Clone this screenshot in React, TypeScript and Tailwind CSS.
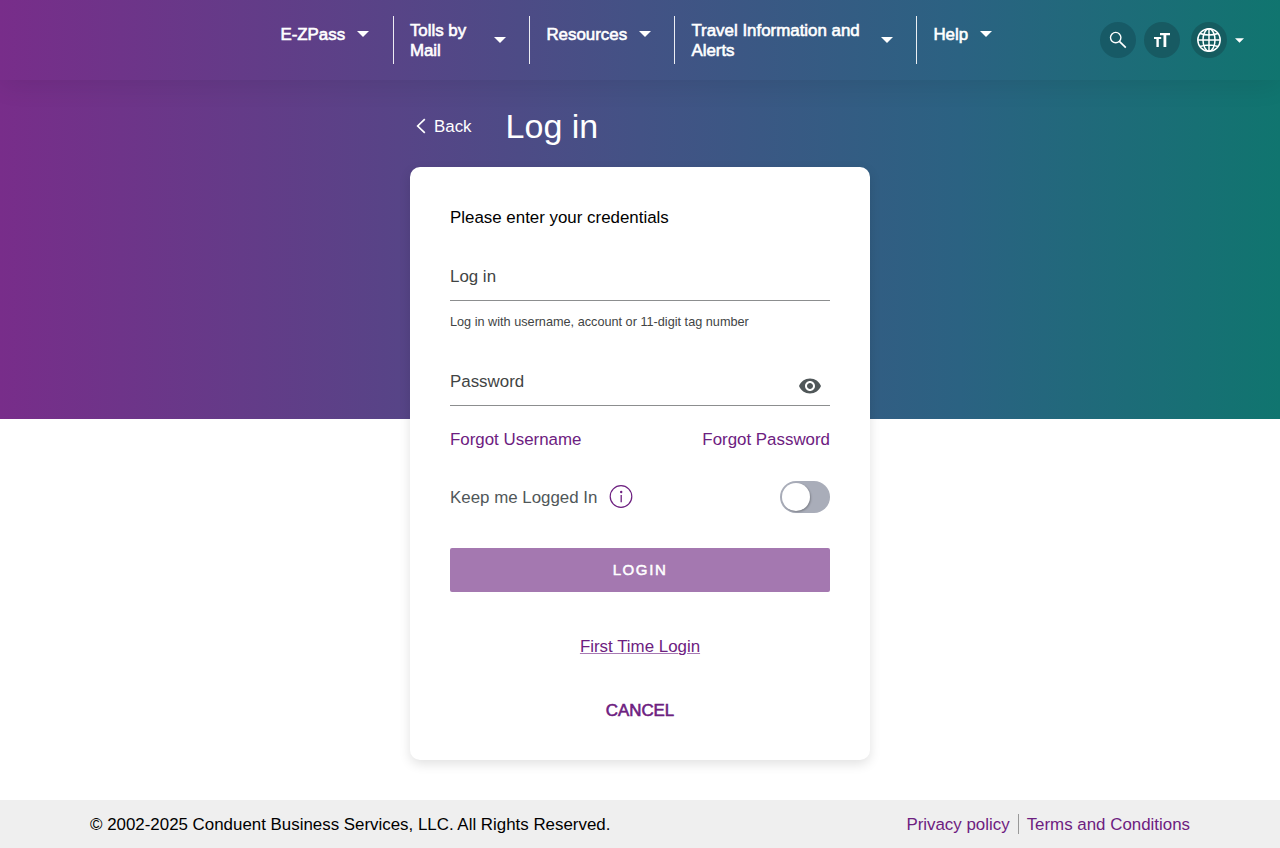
import React, { useState } from "react";

type NavEntry = { label: string; box: string; text: string; double?: boolean };

const NAV: NavEntry[] = [
  { label: "E-ZPass", box: "w-[113px]", text: "w-[76.5px]" },
  { label: "Tolls by Mail", box: "w-[136px] border-l border-white/90 pl-[15.5px]", text: "w-[84px]", double: true },
  { label: "Resources", box: "w-[145px] border-l border-white/90 pl-4", text: "w-[92.5px]" },
  { label: "Travel Information and Alerts", box: "w-[242px] border-l border-white/90 pl-4", text: "w-[189.5px]", double: true },
  { label: "Help", box: "w-[90px] border-l border-white/90 pl-4", text: "w-[46.5px]" },
];

function Caret({ className }: { className: string }) {
  return (
    <svg viewBox="0 0 12 6" className={className} fill="currentColor" aria-hidden="true">
      <path d="M0 0h12L6 6z" />
    </svg>
  );
}

function Header() {
  return (
    <header className="flex h-20 items-start pt-4 text-white shadow-[0_4px_28px_rgba(0,0,0,0.09)]">
      <nav className="flex pl-[280.4px]">
        {NAV.map((item) => (
          <button key={item.label} className={`flex h-12 shrink-0 items-start text-left ${item.box}`}>
            <span className={`flex items-center ${item.double ? "pt-1" : "pt-2"}`}>
              <span className={`-mb-px pt-px text-[16.9px] leading-5 [-webkit-text-stroke:0.6px_white] ${item.text}`}>
                {item.label.startsWith("Tolls") ? (
                  <>Tolls by<br />Mail</>
                ) : (
                  item.label
                )}
              </span>
              <Caret className="h-[6px] w-3" />
            </span>
          </button>
        ))}
      </nav>
      <div className="ml-auto flex items-center pt-[6px] pr-9">
        <button aria-label="Search" className="flex size-9 items-center justify-center rounded-full bg-[#175a66]">
          <svg viewBox="0 0 18 18" className="size-[18px]" fill="none" stroke="currentColor" aria-hidden="true">
            <circle cx="6.700" cy="6.600" r="5.200" strokeWidth="1.400" />
            <path d="M10.400 10.300 16.800 16.700" strokeWidth="1.700" />
          </svg>
        </button>
        <button aria-label="Text size" className="ml-2 flex size-9 items-center justify-center rounded-full bg-[#175a62]">
          <svg viewBox="0 0 18 16" className="h-4 w-[18px]" fill="currentColor" aria-hidden="true">
            <path d="M7 1h10v2.300h-3.700V15h-2.800V3.300H7zM1 5h7.200v2H5.800v8H3.400V7H1z" />
          </svg>
        </button>
        <button aria-label="Language" className="ml-[11px] flex items-center">
          <span className="flex size-9 items-center justify-center rounded-full bg-[#155c60]">
            <svg viewBox="0 0 24 24" className="size-6" fill="none" stroke="currentColor" strokeWidth="1.500" aria-hidden="true">
              <circle cx="12" cy="12" r="11.200" />
              <ellipse cx="12" cy="12" rx="6" ry="11.200" />
              <path d="M12 .7v22.600M.7 12h22.600M3 5.500Q12 8.500 21 5.500M3 18.500Q12 15.500 21 18.500" />
            </svg>
          </span>
          <Caret className="ml-2 h-[5px] w-[9px]" />
        </button>
      </div>
    </header>
  );
}

function LoginCard() {
  const [keep, setKeep] = useState(false);
  return (
    <section className="flex h-[593px] w-[460px] flex-col rounded-[10px] bg-white px-10 pt-[41px] text-[16.9px] leading-5 shadow-[0_4px_12px_rgba(0,0,0,0.12)]">
      <p className="text-black">Please enter your credentials</p>
      <div className="mt-[30px] flex h-[43px] items-start border-b border-[#8c8e8f] pt-[9px] text-[#414444]">
        Log in
      </div>
      <p className="mt-[13px] h-4 text-[12.7px] leading-4 text-[#414444]">
        Log in with username, account or 11-digit tag number
      </p>
      <div className="mt-[33px] flex h-[43px] items-start justify-between border-b border-[#8c8e8f] text-[#414444]">
        <span className="pt-[9px]">Password</span>
        <svg viewBox="0 0 24 24" className="mt-[11px] mr-2 size-6" fill="#505759" aria-hidden="true">
          <path d="M12 4.500C7 4.500 2.730 7.610 1 12c1.730 4.390 6 7.500 11 7.500s9.270-3.110 11-7.500c-1.730-4.390-6-7.500-11-7.500zM12 17c-2.760 0-5-2.240-5-5s2.240-5 5-5 5 2.240 5 5-2.240 5-5 5zm0-8c-1.660 0-3 1.340-3 3s1.340 3 3 3 3-1.340 3-3-1.340-3-3-3z" />
        </svg>
      </div>
      <div className="mt-6 flex h-5 justify-between text-[#6d2080]">
        <a href="#username">Forgot Username</a>
        <a href="#password">Forgot Password</a>
      </div>
      <div className="mt-[31px] flex h-8 items-center">
        <span className="pt-0.5 text-[#505759]">Keep me Logged In</span>
        <svg viewBox="0 0 24 24" className="ml-[11.5px] size-6 text-[#6d2080]" fill="none" stroke="currentColor" aria-hidden="true">
          <circle cx="12" cy="11.500" r="10.800" strokeWidth="1.200" />
          <path d="M12.200 10v7.200" strokeWidth="1.300" />
          <circle cx="12.200" cy="7" r="1.200" fill="currentColor" stroke="none" />
        </svg>
        <button
          role="switch"
          aria-label="Keep me Logged In"
          aria-checked={keep}
          onClick={() => setKeep(!keep)}
          className={`ml-auto flex h-8 w-[50px] items-center rounded-full px-0.5 ${keep ? "justify-end bg-[#6d2080]" : "bg-[#a9adb9]"}`}
        >
          <span className="size-7 rounded-full bg-white shadow-[1px_1px_2px_rgba(0,0,0,0.25)]" />
        </button>
      </div>
      <button className="mt-[35px] h-11 rounded-xs bg-[#a478b0] text-[15px] leading-5 tracking-[1.600px] text-white [-webkit-text-stroke:0.5px_white]">
        LOGIN
      </button>
      <a href="#first" className="mt-[45px] self-center text-[#6d2080] underline decoration-[#6d2080]/60 decoration-1 underline-offset-1">
        First Time Login
      </a>
      <button className="mt-11 self-center text-[#6d2080] [-webkit-text-stroke:0.6px_#6d2080]">
        CANCEL
      </button>
    </section>
  );
}

export default function App() {
  return (
    <div className="flex h-[848px] w-[1280px] flex-col overflow-hidden bg-white bg-[linear-gradient(90deg,#782d8a_0%,#435285_50%,#2b6282_75%,#10756f_100%)] bg-[length:100%_419px] bg-no-repeat font-['Liberation_Sans',Arial,sans-serif]">
      <Header />
      <main className="mx-auto flex w-[460px] flex-1 flex-col">
        <div className="flex h-[87px] items-center pt-[5px] text-white">
          <a href="#back" className="flex items-center text-[16.9px] leading-5">
            <svg viewBox="0 0 10 16" className="ml-[6px] h-4 w-[10px]" fill="none" stroke="currentColor" strokeWidth="1.700" aria-hidden="true">
              <path d="M8.800 1.200 1.700 8l7.100 6.800" />
            </svg>
            <span className="-mb-px ml-2 pt-px">Back</span>
          </a>
          <h1 className="ml-[34px] text-[34px] leading-10">Log in</h1>
        </div>
        <LoginCard />
      </main>
      <footer className="flex h-12 items-center justify-between bg-[#efefef] px-[90px] text-[16.9px] leading-5">
        <p className="pt-0.5 text-black">© 2002-2025 Conduent Business Services, LLC. All Rights Reserved.</p>
        <div className="flex text-[#6d2080]">
          <a href="#privacy" className="-mb-px pt-px pr-2">Privacy policy</a>
          <span className="h-5 w-px bg-[#999]" />
          <a href="#terms" className="-mb-px pt-px pl-2">Terms and Conditions</a>
        </div>
      </footer>
    </div>
  );
}
